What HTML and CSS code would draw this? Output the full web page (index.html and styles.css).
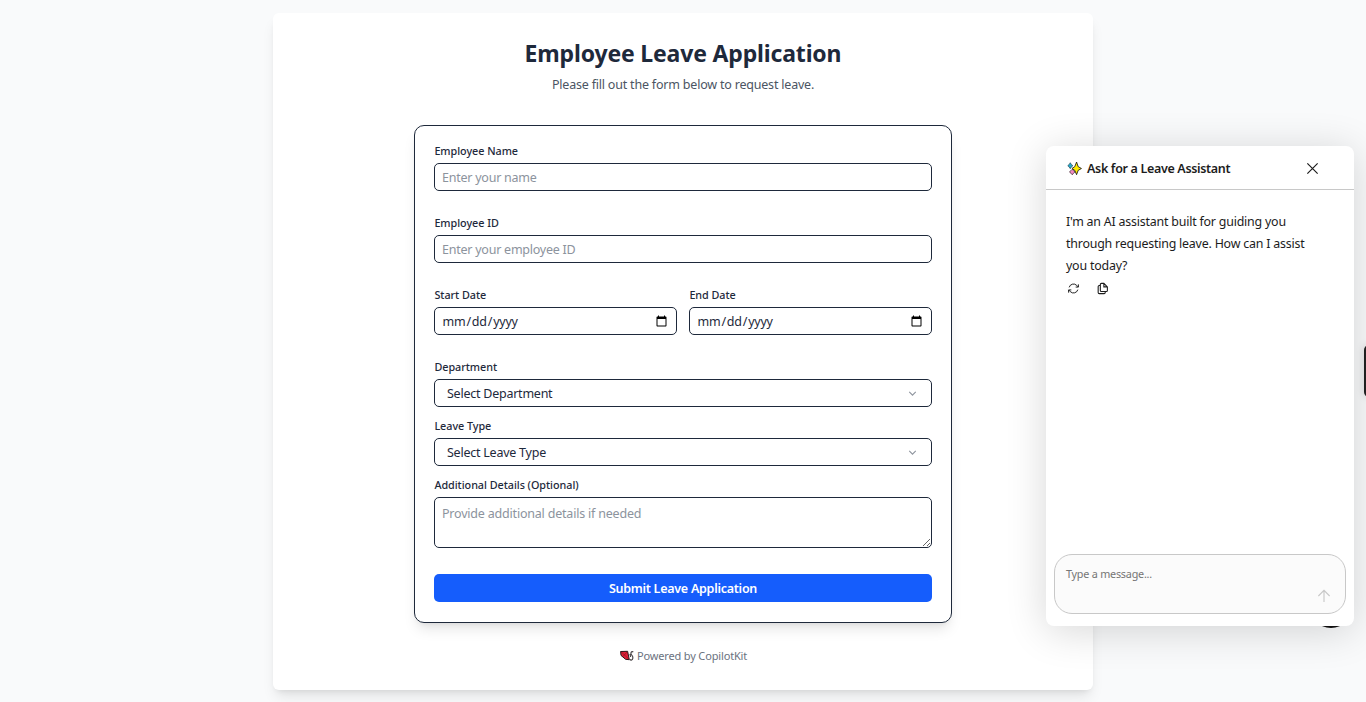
FILE: index.html
```html
<!DOCTYPE html>
<html lang="en">
<head>
<meta charset="utf-8">
<title>Employee Leave Application</title>
<link rel="stylesheet" href="styles.css">
</head>
<body>
<main class="page">
  <h1 class="title"><span>Employee Leave Application</span></h1>
  <p class="subtitle">Please fill out the form below to request leave.</p>
  <form class="form">
    <div class="field">
      <label class="label" for="name">Employee Name</label>
      <input class="control" id="name" type="text" placeholder="Enter your name">
    </div>
    <div class="field">
      <label class="label" for="eid">Employee ID</label>
      <input class="control" id="eid" type="text" placeholder="Enter your employee ID">
    </div>
    <div class="dates">
      <div class="field">
        <label class="label" for="start">Start Date</label>
        <input class="control date" id="start" type="date">
      </div>
      <div class="field">
        <label class="label" for="end">End Date</label>
        <input class="control date" id="end" type="date">
      </div>
    </div>
    <div class="field compact">
      <span class="label">Department</span>
      <button class="control select" type="button"><span>Select Department</span>
        <svg class="chevron" viewBox="0 0 24 24"><path d="m6 9 6 6 6-6"/></svg></button>
    </div>
    <div class="field compact">
      <span class="label">Leave Type</span>
      <button class="control select" type="button"><span>Select Leave Type</span>
        <svg class="chevron" viewBox="0 0 24 24"><path d="m6 9 6 6 6-6"/></svg></button>
    </div>
    <div class="field details">
      <label class="label" for="details">Additional Details (Optional)</label>
      <textarea class="control area" id="details" placeholder="Provide additional details if needed"></textarea>
    </div>
    <button class="submit" type="button">Submit Leave Application</button>
  </form>
  <footer class="footer">
    <svg class="kite" viewBox="0 0 14 12">
      <path d="M.6 1.500 7.600 1.300 9.300 9.700 5.600 9.300 1 5.400z" fill="#e02038" stroke="#24171a"/>
      <path d="M1 1.700 9 9.200M7.400 1.700 2.800 6.600" fill="none" stroke="#80101e" stroke-width=".6"/>
      <path d="M13.300 1.900c-2.200-.8-3.200 1.300-1.700 2.900 1.900 1.900 1.600 5-.200 5.300-.8.100-1.300-.3-1.600-.7M10 3.800l.6 3.200" fill="none" stroke="#4a4648" stroke-width="1.200"/>
    </svg>
    <span>Powered by CopilotKit</span>
  </footer>
</main>

<div class="launcher"></div>
<div class="edge-tab"></div>
<aside class="chat">
  <header class="chat-head">
    <svg class="sparkles" viewBox="0 0 16 16">
      <path d="M10.200 1.100 11.900 6 15.400 8 11.900 10 10.200 14.600 8.300 10 5.300 8 8.300 6z" fill="#ffea00" stroke="#161616" stroke-width=".9"/>
      <path d="M3.500 1.800 4.700 3.800 6.300 5 4.700 6.300 3.500 8.200 2.200 6.300.8 5 2.200 3.800z" fill="#25a9cc" stroke="#16303a" stroke-width=".6"/>
      <path d="M5.600 8.800 6.900 10.300 8.600 11.600 6.900 13 5.600 14.700 4.200 13 2.600 11.600 4.200 10.300z" fill="#f38ac0" stroke="#2a161f" stroke-width=".7"/>
    </svg>
    <span class="chat-title">Ask for a Leave Assistant</span>
    <svg class="close" viewBox="0 0 24 24"><path d="M5.500 18.500l13-13M5.500 5.500l13 13"/></svg>
  </header>
  <div class="chat-body">
    <p class="message">I'm an AI assistant built for guiding you<br>through requesting leave. How can I assist<br>you today?</p>
    <div class="actions">
      <svg class="action" viewBox="0 0 24 24"><path d="M16.023 9.348h4.992v-.001M2.985 19.644v-4.992m0 0h4.992m-4.993 0 3.181 3.183a8.250 8.250 0 0 0 13.803-3.700M4.031 9.865a8.250 8.250 0 0 1 13.803-3.700l3.181 3.182m0-4.991v4.990"/></svg>
      <svg class="action copy" viewBox="0 0 24 24"><path d="M14.500 2.500H10A2 2 0 0 0 8 4.500v11a2 2 0 0 0 2 2h9a2 2 0 0 0 2-2V9zM14.500 2.500V9H21M8 6.500H6a2 2 0 0 0-2 2v11a2 2 0 0 0 2 2h9a2 2 0 0 0 2-2v-2"/></svg>
    </div>
  </div>
  <div class="composer">
    <span class="composer-text">Type a message...</span>
    <svg class="send" viewBox="0 0 24 24"><path d="M12 20V4.500M4.500 12 12 4.500l7.500 7.500"/></svg>
  </div>
</aside>
</body>
</html>
```
FILE: styles.css
```css
* { box-sizing: border-box; }
body {
  margin: 0;
  height: 702px;
  overflow: hidden;
  background: #f9fafb;
  font-family: "Noto Sans", "Open Sans", sans-serif;
  color: #1e293b;
  padding-top: 13px;
}
svg { display: block; fill: none; flex: none; }
.page {
  width: 820px;
  height: 677px;
  margin: 0 auto;
  background: #fff;
  border-radius: 6px;
  box-shadow: 0 9px 14px -3px rgba(0,0,0,.1), 0 4px 6px -4px rgba(0,0,0,.1);
  display: flex;
  flex-direction: column;
  align-items: center;
}
.title {
  margin: 24px 0 0;
  font-size: 23px;
  line-height: 32px;
  font-weight: 700;
  letter-spacing: -.16px;
  white-space: nowrap;
}
.subtitle {
  margin: 6px 0 0;
  font-size: 12.5px;
  line-height: 20px;
  letter-spacing: -.2px;
  color: #4b5563;
}
.form {
  width: 538px;
  height: 498px;
  margin-top: 30px;
  border: 1px solid #1e293b;
  border-radius: 10px;
  padding: 17px 19px;
  background: #fff;
  box-shadow: 0 9px 14px -3px rgba(0,0,0,.1), 0 4px 6px -4px rgba(0,0,0,.1);
}
.field { display: flex; flex-direction: column; height: 72px; }
.field.compact { height: 59px; }
.field.details { height: 97px; }
.dates { display: grid; grid-template-columns: 1fr 1fr; gap: 12px; }
.label {
  font-size: 10.8px;
  line-height: 16px;
  font-weight: 500;
  letter-spacing: -.04px;
  margin-bottom: 4px;
  padding-left: .4px;
}
.control {
  width: 100%;
  height: 28px;
  border: 1px solid #1e293b;
  border-radius: 5px;
  padding: 0 7px;
  background: #fff;
  font-family: inherit;
  font-size: 12.5px;
  letter-spacing: -.24px;
  color: #1e293b;
  outline: none;
}
.control::placeholder { color: #8c939d; opacity: 1; }
.date { padding: 0 6.5px; }
.select {
  display: flex;
  align-items: center;
  justify-content: space-between;
  padding: 0 12px;
}
.chevron { width: 13px; height: 13px; stroke: #8e949e; stroke-width: 2; }
.area { height: 51px; padding: 6px 7px; line-height: 19px; letter-spacing: -.2px; resize: vertical; }
.submit {
  display: block;
  width: 100%;
  height: 28px;
  border: 0;
  border-radius: 5px;
  background: #155dfc;
  color: #fff;
  font-family: inherit;
  font-size: 12.5px;
  font-weight: 600;
  letter-spacing: -.26px;
}
.footer {
  display: flex;
  align-items: center;
  gap: 3px;
  margin-top: 25px;
  padding-left: 1px;
  font-size: 11px;
  line-height: 16px;
  letter-spacing: -.15px;
  color: #6b7280;
}
.kite { width: 14px; height: 12px; }
.launcher {
  position: absolute;
  left: 1309px;
  top: 584px;
  width: 44px;
  height: 44px;
  border-radius: 50%;
  background: #111;
}
.edge-tab {
  position: absolute;
  left: 1364px;
  top: 345px;
  width: 20px;
  height: 52px;
  border-radius: 5px;
  background: #222;
  box-shadow: 0 0 8px rgba(0,0,0,.15);
}
.chat {
  position: absolute;
  left: 1046px;
  top: 146px;
  width: 308px;
  height: 480px;
  border-radius: 8px;
  background: #fff;
  color: #1c1c1c;
  box-shadow: 0 5px 40px rgba(0,0,0,.16);
  display: flex;
  flex-direction: column;
}
.chat-head {
  height: 44px;
  border-bottom: 1px solid #c8c8c8;
  display: flex;
  align-items: center;
  padding: 2px 32px 0 21px;
}
.sparkles { width: 15px; height: 15px; }
.chat-title {
  flex: 1;
  margin-left: 5px;
  font-size: 12.5px;
  font-weight: 600;
  letter-spacing: -.33px;
  white-space: nowrap;
}
.close { width: 19px; height: 19px; stroke: #1c1c1c; stroke-width: 1.5; }
.chat-body { flex: 1; padding: 21px 20px 0; }
.message { margin: 0; font-size: 12.4px; line-height: 22px; letter-spacing: -.2px; white-space: nowrap; }
.actions { display: flex; gap: 16px; margin-top: 5px; padding-left: 1px; }
.action { width: 13px; height: 13px; stroke: #1c1c1c; stroke-width: 1.8; }
.action.copy { stroke-width: 2; }
.composer {
  height: 60px;
  margin: 0 8px 12px;
  border: 1px solid #c8c8c8;
  border-radius: 18px;
  background: #fbfbfb;
  padding: 11px 12px 8px 11px;
  display: flex;
  justify-content: space-between;
}
.composer-text { font-size: 10.8px; line-height: 16px; letter-spacing: -.22px; color: #757575; }
.send { width: 18px; height: 18px; align-self: flex-end; stroke: #c8c8c8; stroke-width: 1.5; }
```
